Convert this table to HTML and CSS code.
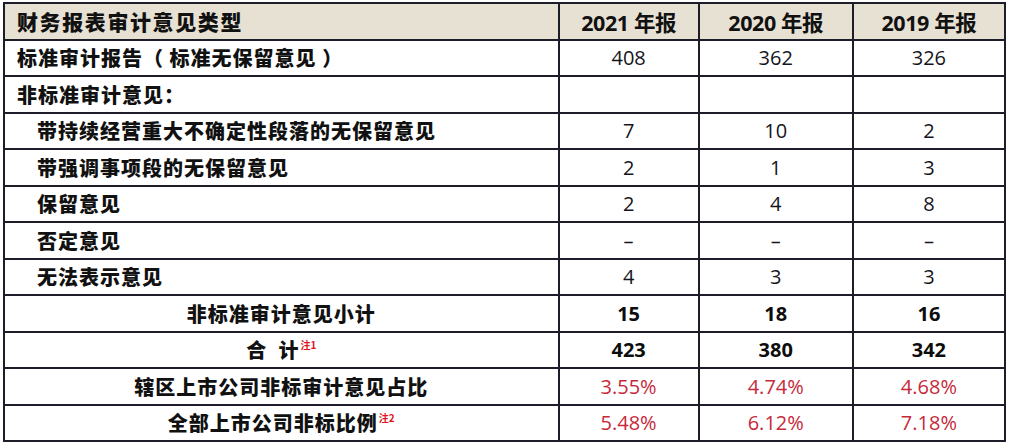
FILE: index.html
```html
<!DOCTYPE html>
<html lang="zh-CN">
<head>
<meta charset="utf-8">
<title>财务报表审计意见类型</title>
<link rel="stylesheet" href="styles.css">
</head>
<body>
<table class="audit">
  <colgroup>
    <col class="c-name"><col class="c-year"><col class="c-year2"><col class="c-year3">
  </colgroup>
  <thead>
    <tr class="head">
      <th class="name">财务报表审计意见类型</th>
      <th>2021 年报</th>
      <th>2020 年报</th>
      <th>2019 年报</th>
    </tr>
  </thead>
  <tbody>
    <tr><td class="name">标准审计报告（ 标准无保留意见 ）</td><td class="num">408</td><td class="num">362</td><td class="num">326</td></tr>
    <tr><td class="name">非标准审计意见：</td><td></td><td></td><td></td></tr>
    <tr><td class="name sub">带持续经营重大不确定性段落的无保留意见</td><td class="num">7</td><td class="num">10</td><td class="num">2</td></tr>
    <tr><td class="name sub">带强调事项段的无保留意见</td><td class="num">2</td><td class="num">1</td><td class="num">3</td></tr>
    <tr><td class="name sub">保留意见</td><td class="num">2</td><td class="num">4</td><td class="num">8</td></tr>
    <tr><td class="name sub">否定意见</td><td class="num">–</td><td class="num">–</td><td class="num">–</td></tr>
    <tr><td class="name sub">无法表示意见</td><td class="num">4</td><td class="num">3</td><td class="num">3</td></tr>
    <tr><td class="name center">非标准审计意见小计</td><td class="num bold">15</td><td class="num bold">18</td><td class="num bold">16</td></tr>
    <tr><td class="name center">合&nbsp;&nbsp;计<sup class="note">注1</sup></td><td class="num bold">423</td><td class="num bold">380</td><td class="num bold">342</td></tr>
    <tr><td class="name center">辖区上市公司非标审计意见占比</td><td class="num red">3.55%</td><td class="num red">4.74%</td><td class="num red">4.68%</td></tr>
    <tr><td class="name center">全部上市公司非标比例<sup class="note">注2</sup></td><td class="num red">5.48%</td><td class="num red">6.12%</td><td class="num red">7.18%</td></tr>
  </tbody>
</table>
</body>
</html>
```

FILE: styles.css
```css
html, body {
  margin: 0;
  padding: 0;
  background: #ffffff;
}
body {
  padding: 2px 0 0 3px;
  font-family: "Noto Sans CJK SC", "Noto Sans", sans-serif;
  color: #111111;
}
.audit {
  width: 1003px;
  border-collapse: collapse;
  table-layout: fixed;
  border: 2px solid #1d1d2a;
}
.c-name { width: 554px; }
.c-year { width: 140px; }
.c-year2 { width: 154px; }
.c-year3 { width: 152px; }
.audit th, .audit td {
  border: 2px solid #1d1d2a;
  height: 34.5px;
  padding: 0;
  vertical-align: middle;
  white-space: nowrap;
}
.head th {
  background: #e7e1d3;
  font-family: "Open Sans", "Noto Sans CJK SC", sans-serif;
  font-weight: 700;
  font-size: 21.5px;
  text-align: center;
  letter-spacing: -0.4px;
}
.head th.name {
  font-family: "Noto Sans CJK SC", sans-serif;
  font-weight: 900;
  font-size: 21px;
  letter-spacing: 1.6px;
  text-align: left;
  padding-left: 12px;
}
td.name {
  font-weight: 900;
  font-size: 20px;
  letter-spacing: 1px;
  text-align: left;
  padding-left: 12px;
}
td.name.sub {
  padding-left: 32px;
}
td.name.center {
  text-align: center;
  padding-left: 0;
}
td.num {
  font-family: "Open Sans", sans-serif;
  font-size: 20px;
  text-align: center;
  color: #151520;
}
td.num.bold {
  font-weight: 700;
  color: #0d0d0d;
}
td.num.red {
  color: #c62a3a;
}
.note {
  font-size: 10px;
  font-weight: 700;
  color: #e0141e;
  vertical-align: 9px;
  letter-spacing: 0;
  margin-left: 1px;
}
```
